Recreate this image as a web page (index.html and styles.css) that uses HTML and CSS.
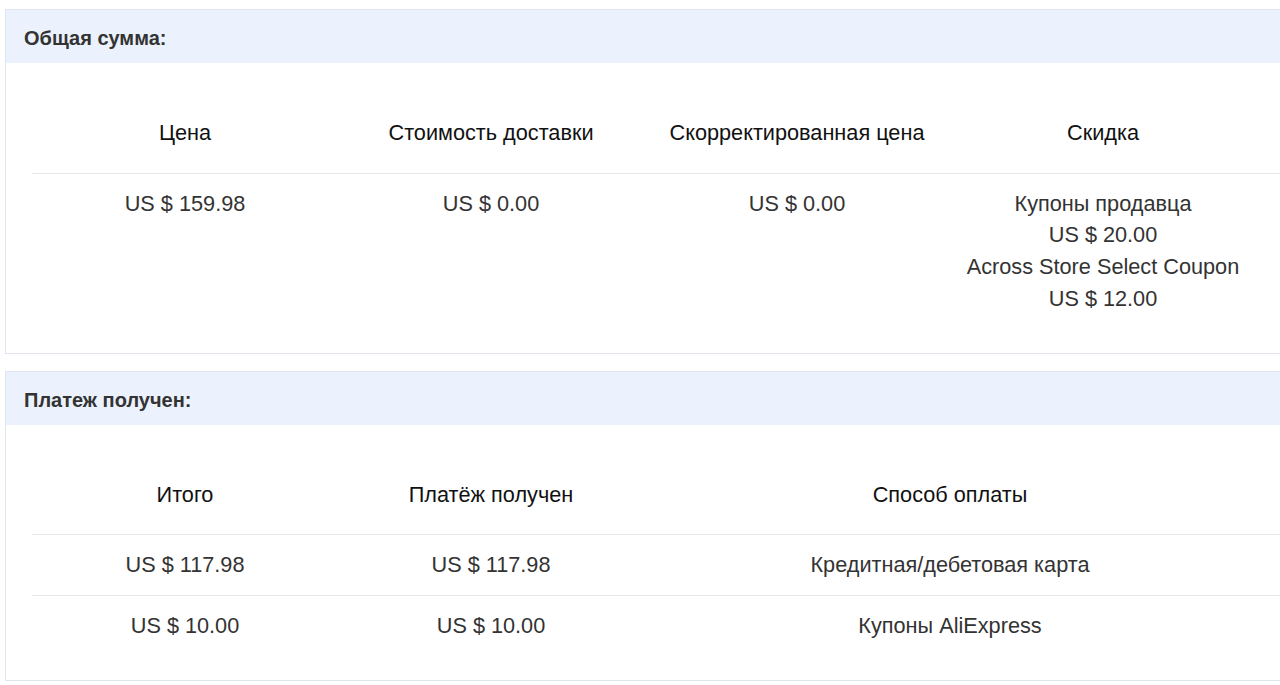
FILE: index.html
```html
<!DOCTYPE html>
<html lang="ru">
<head>
<meta charset="utf-8">
<title>Заказ</title>
<link rel="stylesheet" href="styles.css">
</head>
<body>
<div class="page">
  <section class="panel">
    <div class="panel-head">Общая сумма:</div>
    <div class="panel-body">
      <div class="row head-row">
        <div class="cell">Цена</div>
        <div class="cell">Стоимость доставки</div>
        <div class="cell">Скорректированная цена</div>
        <div class="cell">Скидка</div>
      </div>
      <div class="row data-row">
        <div class="cell">US $ 159.98</div>
        <div class="cell">US $ 0.00</div>
        <div class="cell">US $ 0.00</div>
        <div class="cell">
          <div>Купоны продавца</div>
          <div>US $ 20.00</div>
          <div>Across Store Select Coupon</div>
          <div>US $ 12.00</div>
        </div>
      </div>
    </div>
  </section>

  <section class="panel">
    <div class="panel-head">Платеж получен:</div>
    <div class="panel-body">
      <div class="row head-row">
        <div class="cell">Итого</div>
        <div class="cell">Платёж получен</div>
        <div class="cell wide">Способ оплаты</div>
      </div>
      <div class="row data-row">
        <div class="cell">US $ 117.98</div>
        <div class="cell">US $ 117.98</div>
        <div class="cell wide">Кредитная/дебетовая карта</div>
      </div>
      <div class="row data-row">
        <div class="cell">US $ 10.00</div>
        <div class="cell">US $ 10.00</div>
        <div class="cell wide">Купоны AliExpress</div>
      </div>
    </div>
  </section>
</div>
</body>
</html>
```

FILE: styles.css
```css
html, body {
  margin: 0;
  padding: 0;
  background: #ffffff;
  overflow: hidden;
}

body {
  font-family: "Liberation Sans", Arial, sans-serif;
  color: #333333;
}

.page {
  display: flex;
  flex-direction: column;
  gap: 17px;
  padding: 9px 0 0 5px;
  width: 1340px;
}

.panel {
  border: 1px solid #dfe4f0;
  background: #ffffff;
}

.panel-head {
  height: 53px;
  line-height: 56px;
  padding-left: 18px;
  background: #ebf2fd;
  font-weight: bold;
  font-size: 20px;
  color: #333333;
}

.panel-body {
  padding: 0 0 24px 26px;
}

.row {
  display: flex;
  font-size: 21.7px;
  line-height: 31.7px;
  text-align: center;
}

.row + .row {
  border-top: 1px solid #e6e6e6;
}

.cell {
  flex: 0 0 306px;
}

.cell.wide {
  flex-basis: 612px;
}

.head-row .cell {
  padding: 54px 0 24px;
  color: #111111;
}

.data-row .cell {
  padding: 14px 0;
}
```
